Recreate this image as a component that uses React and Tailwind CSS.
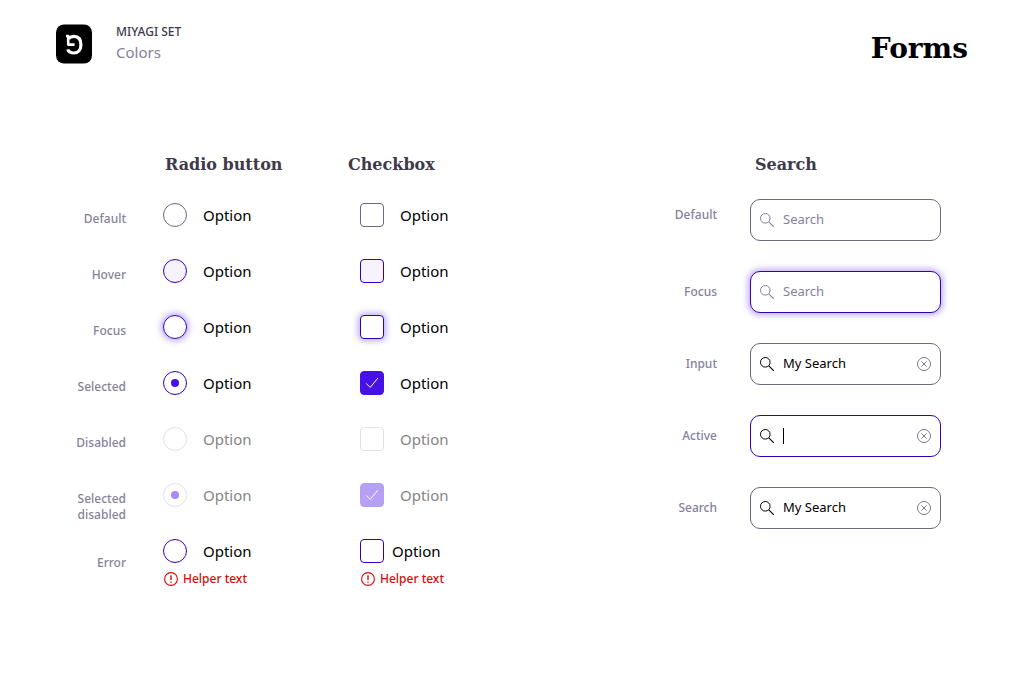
import { Fragment } from "react";

const RADIO_BASE =
  "peer col-start-1 row-start-1 m-0 size-6 appearance-none rounded-full border";
const CHECK_BASE =
  "peer col-start-1 row-start-1 m-0 size-6 appearance-none rounded-[4px] border";

const FOCUS_GLOW = "shadow-[0_0_6px_2px_rgba(70,17,231,0.35)]";

const STATES = [
  { id: "default", label: "Default", style: "border-[#6b687f] bg-white" },
  { id: "hover", label: "Hover", style: "border-[#3300b8] bg-[#f6f3ff]" },
  { id: "focus", label: "Focus", style: `border-[#3300b8] bg-white ${FOCUS_GLOW}` },
  {
    id: "selected",
    label: "Selected",
    style: "border-[#3300b8] bg-white",
    checkStyle: "border-[#4611e7] bg-[#4611e7]",
    checked: true,
  },
  { id: "disabled", label: "Disabled", style: "border-[#e2e2e4] bg-white", disabled: true },
  {
    id: "selected-disabled",
    label: "Selected disabled",
    style: "border-[#e2e2e4] bg-white",
    checkStyle: "border-[#b5a0f5] bg-[#b5a0f5]",
    checked: true,
    disabled: true,
  },
  { id: "error", label: "Error", style: "border-[#3300b8] bg-white", error: true },
];

const SEARCHES = [
  { id: "default", label: "Default", border: "border-[#6b687f]", labelStyle: "pt-2" },
  { id: "focus", label: "Focus", border: `border-[#3300b8] ${FOCUS_GLOW}` },
  { id: "input", label: "Input", border: "border-[#6b687f]", value: "My Search", filled: true },
  { id: "active", label: "Active", border: "border-[#3300b8]", caret: true, filled: true },
  { id: "search", label: "Search", border: "border-[#6b687f]", value: "My Search", filled: true },
];

function Logo() {
  return (
    <svg width="36" height="40" viewBox="0 0 36 40" role="img" aria-label="Miyagi">
      <rect y="0.5" width="36" height="39" rx="8" fill="#000" />
      <g fill="none" stroke="#fff" strokeLinejoin="round">
        <path d="M10 12H12.2V20.6H18.6" strokeWidth="2.6" />
        <path
          d="M12.6 14.6C14 13 15.8 12.4 18 12.4C22.6 12.4 24.9 15.8 24.9 20.8C24.9 25.8 22.3 29 18 29C14.4 29 12.4 27.6 11.8 25.4"
          strokeWidth="3.2"
        />
      </g>
    </svg>
  );
}

function ErrorIcon() {
  return (
    <svg width="14" height="14" viewBox="0 0 14 14" fill="none" stroke="#d50b0b" aria-hidden="true">
      <circle cx="7" cy="7" r="6.4" strokeWidth="1.1" />
      <path d="M7 3.3V8.1M7 9.4V10.7" strokeWidth="1.4" />
    </svg>
  );
}

function SearchIcon() {
  return (
    <svg width="14" height="14" viewBox="0 0 14 14" fill="none" stroke="currentColor" aria-hidden="true">
      <circle cx="5.3" cy="5.3" r="4.8" />
      <path d="M8.8 8.8L13.8 13.8" strokeWidth="1.1" />
    </svg>
  );
}

function ClearIcon() {
  return (
    <svg width="14" height="14" viewBox="0 0 14 14" fill="none" stroke="#7a778d" aria-hidden="true">
      <circle cx="7" cy="7" r="6.5" />
      <path d="M4.4 4.4L9.6 9.6M9.6 4.4L4.4 9.6" />
    </svg>
  );
}

function Option({ kind, state }) {
  const radio = kind === "radio";
  const id = `${kind}-${state.id}`;
  const box = radio ? RADIO_BASE : CHECK_BASE;
  const style = (!radio && state.checkStyle) || state.style;
  return (
    <div className={state.error ? "" : "min-h-14"}>
      <div className={`flex items-center ${state.error && !radio ? "gap-2" : "gap-4"}`}>
        <span className="grid place-items-center">
          <input
            type={kind}
            id={id}
            name={id}
            defaultChecked={state.checked}
            disabled={state.disabled}
            aria-describedby={state.error ? `${id}-help` : undefined}
            className={`${box} ${style}`}
          />
          {radio ? (
            <span
              className={`pointer-events-none invisible col-start-1 row-start-1 size-2 rounded-full peer-checked:visible ${state.disabled ? "bg-[#a48af2]" : "bg-[#4611e7]"}`}
            />
          ) : (
            <svg
              width="14"
              height="12"
              viewBox="0 0 14 12"
              fill="none"
              stroke="#fff"
              className="pointer-events-none invisible col-start-1 row-start-1 peer-checked:visible"
              aria-hidden="true"
            >
              <path d="M1.2 6.4L5.2 10.4L12.8 1.2" />
            </svg>
          )}
        </span>
        <label htmlFor={id} className={`text-[15px] leading-6 ${state.disabled ? "text-[#858585]" : "text-black"}`}>
          Option
        </label>
      </div>
      {state.error && (
        <p id={`${id}-help`} className="mt-2 flex items-center gap-[5px] pl-px text-xs leading-4 font-medium text-[#d50b0b]">
          <ErrorIcon />
          Helper text
        </p>
      )}
    </div>
  );
}

function SearchField({ field }) {
  const id = `search-${field.id}`;
  return (
    <div className={`flex h-[42px] items-center rounded-[10px] border bg-white px-[9px] ${field.border} ${field.filled ? "text-black" : "text-[#85829a]"}`}>
      <SearchIcon />
      {field.caret && <span className="ml-[9px] h-4 w-px bg-black" />}
      <input
        id={id}
        type="text"
        defaultValue={field.value}
        placeholder={field.filled ? "" : "Search"}
        className={`min-w-0 flex-1 bg-transparent text-[13px] outline-none placeholder:text-[#85829a] ${field.caret ? "" : "ml-[9px]"}`}
      />
      {field.filled && (
        <button type="button" aria-label="Clear">
          <ClearIcon />
        </button>
      )}
    </div>
  );
}

const HEADING = "font-['DejaVu_Serif',serif] text-base leading-6 font-bold text-[#3d3a4a]";
const STATE_LABEL = "text-right text-xs leading-4 font-medium text-[#85829a]";

export default function App() {
  return (
    <div className="min-h-screen bg-white font-['Noto_Sans',sans-serif]">
      <header className="flex items-start justify-between px-14 pt-6">
        <div className="flex gap-6">
          <Logo />
          <div>
            <p className="text-xs leading-4 font-medium text-[#3d3a4a]">MIYAGI SET</p>
            <p className="text-[15px] leading-6 text-[#85829a]">Colors</p>
          </div>
        </div>
        <h1 className="pt-[5px] font-['DejaVu_Serif',serif] text-[28px] leading-10 font-bold text-black">Forms</h1>
      </header>

      <main className="flex items-start justify-between pt-[84px] pr-[83px] pb-16 pl-14">
        <section className="grid grid-cols-[70px_148px_auto] gap-x-[37px]">
          <h2 className={`col-start-2 mb-[26px] pl-0.5 ${HEADING}`}>Radio button</h2>
          <h2 className={`mb-[26px] ${HEADING}`}>Checkbox</h2>
          {STATES.map((state) => (
            <Fragment key={state.id}>
              <p className={`${STATE_LABEL} ${state.error ? "self-center" : "pt-2"}`}>{state.label}</p>
              <Option kind="radio" state={state} />
              <div className="pl-3">
                <Option kind="checkbox" state={state} />
              </div>
            </Fragment>
          ))}
        </section>

        <section className="grid grid-cols-[auto_191px] gap-x-[33px]">
          <h2 className={`col-start-2 mb-[22px] pl-[5px] ${HEADING}`}>Search</h2>
          <div className="col-span-2 grid grid-cols-subgrid gap-y-[30px]">
            {SEARCHES.map((field) => (
              <Fragment key={field.id}>
                <label htmlFor={`search-${field.id}`} className={`${STATE_LABEL} ${field.labelStyle || "self-center"}`}>
                  {field.label}
                </label>
                <SearchField field={field} />
              </Fragment>
            ))}
          </div>
        </section>
      </main>
    </div>
  );
}
